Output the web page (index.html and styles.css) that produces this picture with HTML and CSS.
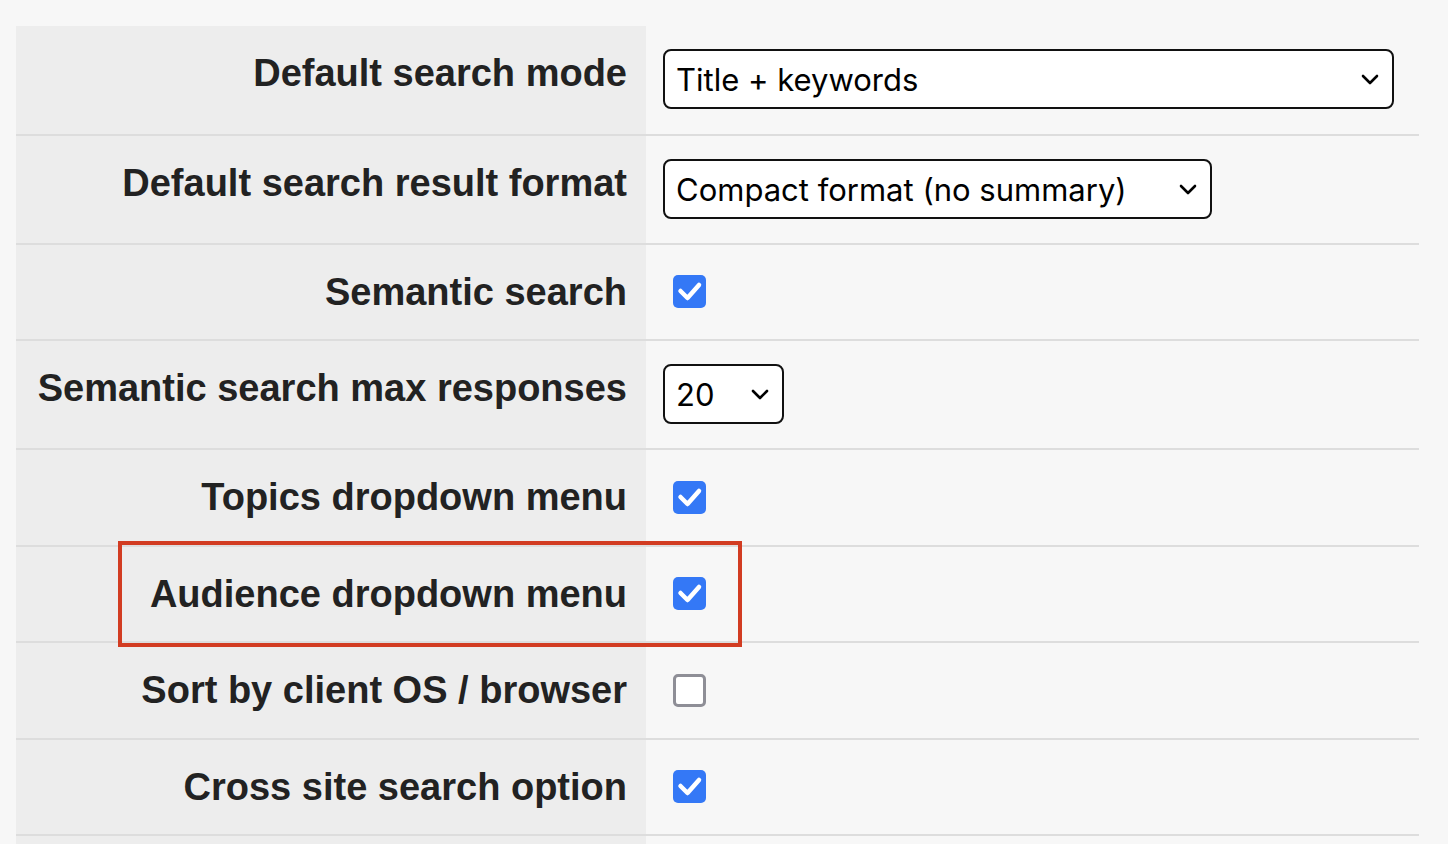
FILE: index.html
```html
<!DOCTYPE html>
<html>
<head>
<meta charset="utf-8">
<link rel="stylesheet" href="styles.css">
</head>
<body>
<div class="table">
  <div class="row first">
    <div class="label">Default search mode</div>
    <div class="value sel-row">
      <div class="select wide"><span>Title + keywords</span>
        <svg class="chev" viewBox="0 0 18 11"><path d="M2 2 L9 9 L16 2" /></svg></div>
    </div>
  </div>
  <div class="row">
    <div class="label">Default search result format</div>
    <div class="value sel-row">
      <div class="select mid"><span>Compact format (no summary)</span>
        <svg class="chev" viewBox="0 0 18 11"><path d="M2 2 L9 9 L16 2" /></svg></div>
    </div>
  </div>
  <div class="row">
    <div class="label">Semantic search</div>
    <div class="value cb-row">
      <span class="cb checked"><svg viewBox="0 0 33 33"><path d="M7.5 16 L14.5 23 L26 10" /></svg></span>
    </div>
  </div>
  <div class="row">
    <div class="label">Semantic search max responses</div>
    <div class="value sel-row">
      <div class="select small"><span>20</span>
        <svg class="chev" viewBox="0 0 18 11"><path d="M2 2 L9 9 L16 2" /></svg></div>
    </div>
  </div>
  <div class="row">
    <div class="label">Topics dropdown menu</div>
    <div class="value cb-row odd">
      <span class="cb checked"><svg viewBox="0 0 33 33"><path d="M7.5 16 L14.5 23 L26 10" /></svg></span>
    </div>
  </div>
  <div class="row highlighted">
    <div class="label">Audience dropdown menu</div>
    <div class="value cb-row">
      <span class="cb checked"><svg viewBox="0 0 33 33"><path d="M7.5 16 L14.5 23 L26 10" /></svg></span>
    </div>
    <div class="highlight"></div>
  </div>
  <div class="row">
    <div class="label">Sort by client OS / browser</div>
    <div class="value cb-row odd">
      <span class="cb"></span>
    </div>
  </div>
  <div class="row">
    <div class="label">Cross site search option</div>
    <div class="value cb-row">
      <span class="cb checked"><svg viewBox="0 0 33 33"><path d="M7.5 16 L14.5 23 L26 10" /></svg></span>
    </div>
  </div>
  <div class="row">
    <div class="label">&nbsp;</div>
    <div class="value cb-row">
      <span class="cb checked"><svg viewBox="0 0 33 33"><path d="M7.5 16 L14.5 23 L26 10" /></svg></span>
    </div>
  </div>
</div>
</body>
</html>
```

FILE: styles.css
```css
html, body {
  margin: 0;
  padding: 0;
  background: #f7f7f7;
  overflow: hidden;
}

.table {
  margin: 26px 0 0 16px;
  width: 1403px;
}

.row {
  position: relative;
  display: flex;
  border-bottom: 2px solid #dddddd;
}

.label {
  width: 611px;
  flex: none;
  background: #ededed;
  padding: 25px 19px 0 0;
  text-align: right;
  font-family: "Liberation Sans", Arial, sans-serif;
  font-weight: bold;
  font-size: 38px;
  line-height: 44px;
  color: #222222;
  white-space: nowrap;
}

.value {
  flex: 1;
  padding-left: 17px;
}

.sel-row {
  padding-top: 23px;
  padding-bottom: 24px;
}

.first .sel-row {
  padding-bottom: 25px;
}

.cb-row {
  padding-top: 30px;
  padding-bottom: 31px;
}

.cb-row.odd {
  padding-top: 31px;
}

.select {
  box-sizing: border-box;
  height: 60px;
  border: 2px solid #111111;
  border-radius: 8px;
  background: #ffffff;
  display: flex;
  align-items: center;
  justify-content: space-between;
  padding: 0 13px 0 11px;
  font-family: "Inter", "Helvetica Neue", Arial, sans-serif;
  font-size: 31px;
  color: #000000;
}

.select.wide { width: 731px; }
.select.mid { width: 549px; }
.select.small { width: 121px; }

.chev {
  width: 18px;
  height: 11px;
  flex: none;
}

.chev path {
  fill: none;
  stroke: #000000;
  stroke-width: 2.6;
  stroke-linecap: round;
  stroke-linejoin: round;
}

.cb {
  display: block;
  box-sizing: border-box;
  width: 33px;
  height: 33px;
  margin-left: 10px;
  border: 3px solid #8e8e96;
  border-radius: 5px;
  background: #ffffff;
}

.cb.checked {
  border: none;
  background: #3478f6;
}

.cb svg {
  display: block;
  width: 33px;
  height: 33px;
}

.cb svg path {
  fill: none;
  stroke: #ffffff;
  stroke-width: 4.5;
  stroke-linecap: round;
  stroke-linejoin: round;
}

.highlight {
  position: absolute;
  z-index: 2;
  left: 102px;
  top: -6px;
  width: 624px;
  height: 106px;
  box-sizing: border-box;
  border: 4px solid #d23c22;
  pointer-events: none;
}
```
